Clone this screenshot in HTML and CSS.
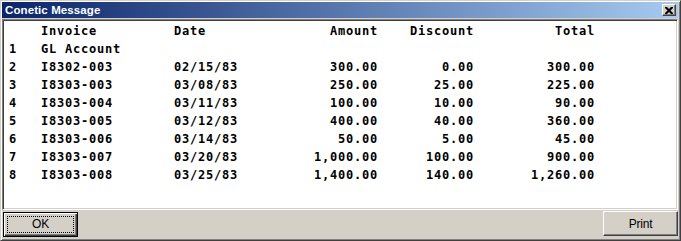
FILE: index.html
```html
<!DOCTYPE html>
<html>
<head>
<meta charset="utf-8">
<link rel="stylesheet" href="styles.css">
</head>
<body>
<div class="window">
  <div class="titlebar">
    <span class="title">Conetic Message</span>
    <span class="close"><svg width="8" height="7" viewBox="0 0 8 7"><path d="M0 0h2l2 2 2-2h2v1l-2.5 2.5L8 6v1H6L4 5 2 7H0V6l2.5-2.5L0 1z" fill="#000"/></svg></span>
  </div>
  <div class="panel">
    <div class="grid">
      <div class="c"></div><div class="c">Invoice</div><div class="c">Date</div><div class="c r">Amount</div><div class="c r">Discount</div><div class="c r">Total</div>
      <div class="c">1</div><div class="c">GL Account</div><div class="c"></div><div class="c r"></div><div class="c r"></div><div class="c r"></div>
      <div class="c">2</div><div class="c">I8302-003</div><div class="c">02/15/83</div><div class="c r">300.00</div><div class="c r">0.00</div><div class="c r">300.00</div>
      <div class="c">3</div><div class="c">I8303-003</div><div class="c">03/08/83</div><div class="c r">250.00</div><div class="c r">25.00</div><div class="c r">225.00</div>
      <div class="c">4</div><div class="c">I8303-004</div><div class="c">03/11/83</div><div class="c r">100.00</div><div class="c r">10.00</div><div class="c r">90.00</div>
      <div class="c">5</div><div class="c">I8303-005</div><div class="c">03/12/83</div><div class="c r">400.00</div><div class="c r">40.00</div><div class="c r">360.00</div>
      <div class="c">6</div><div class="c">I8303-006</div><div class="c">03/14/83</div><div class="c r">50.00</div><div class="c r">5.00</div><div class="c r">45.00</div>
      <div class="c">7</div><div class="c">I8303-007</div><div class="c">03/20/83</div><div class="c r">1,000.00</div><div class="c r">100.00</div><div class="c r">900.00</div>
      <div class="c">8</div><div class="c">I8303-008</div><div class="c">03/25/83</div><div class="c r">1,400.00</div><div class="c r">140.00</div><div class="c r">1,260.00</div>
    </div>
  </div>
  <div class="buttons">
    <button class="btn default"><span class="focus">OK</span></button>
    <button class="btn print">Print</button>
  </div>
</div>
</body>
</html>
```
FILE: styles.css
```css
html, body {
  margin: 0;
  padding: 0;
  background: #d4d0c8;
}
.window {
  width: 681px;
  height: 241px;
  box-sizing: border-box;
  background: #d4d0c8;
  border: 1px solid;
  border-color: #d4d0c8 #404040 #404040 #d4d0c8;
  box-shadow: inset 1px 1px #ffffff, inset -1px -1px #808080;
  padding: 1px 2px 2px 1px;
  display: flex;
  flex-direction: column;
}
.titlebar {
  height: 16px;
  flex: none;
  background: linear-gradient(to right, #0a246a, #a6caf0);
  display: flex;
  align-items: center;
  justify-content: space-between;
  padding: 0 2px 0 3px;
}
.title {
  color: #ffffff;
  font-family: "Liberation Sans", Arial, sans-serif;
  font-weight: bold;
  font-size: 11.5px;
  letter-spacing: 0.1px;
}
.close {
  width: 14px;
  height: 12px;
  box-sizing: border-box;
  background: #d4d0c8;
  border: 1px solid;
  border-color: #ffffff #404040 #404040 #ffffff;
  box-shadow: inset -1px -1px #808080;
  display: flex;
  align-items: center;
  justify-content: center;
}
.panel {
  margin-top: 1px;
  height: 191px;
  flex: none;
  box-sizing: border-box;
  background: #ffffff;
  border: 1px solid;
  border-color: #808080 #ffffff #ffffff #808080;
  box-shadow: inset 1px 1px #404040, inset -1px -1px #d4d0c8;
  padding: 2px 0 0 6px;
}
.grid {
  display: grid;
  grid-template-columns: 32px 133px 126px 78px 96px 121px;
  grid-auto-rows: 18px;
  font-family: "DejaVu Sans Mono", "Liberation Mono", monospace;
  font-weight: bold;
  font-size: 12px;
  letter-spacing: 0.78px;
  line-height: 18px;
  color: #000000;
}
.c {
  white-space: pre;
}
.r {
  text-align: right;
}
.buttons {
  flex: 1;
  display: flex;
  justify-content: space-between;
  align-items: center;
  padding: 0 0 0 1px;
}
.btn {
  margin: 0;
  padding: 0;
  height: 25px;
  background: #d4d0c8;
  font-family: "Liberation Sans", Arial, sans-serif;
  font-size: 12px;
  color: #000;
  letter-spacing: -0.2px;
  box-sizing: border-box;
}
.default {
  width: 75px;
  border: 1px solid #000;
  box-shadow: inset 1px 1px #ffffff, inset -1px -1px #404040, inset -2px -2px #808080;
  padding: 3px;
  display: flex;
}
.focus {
  flex: 1;
  border: 1px dotted #000;
  display: flex;
  align-items: center;
  justify-content: center;
}
.print {
  width: 75px;
  height: 25px;
  border: 1px solid;
  border-color: #ffffff #404040 #404040 #ffffff;
  box-shadow: inset -1px -1px #808080;
  margin-top: -1px;
}
```
